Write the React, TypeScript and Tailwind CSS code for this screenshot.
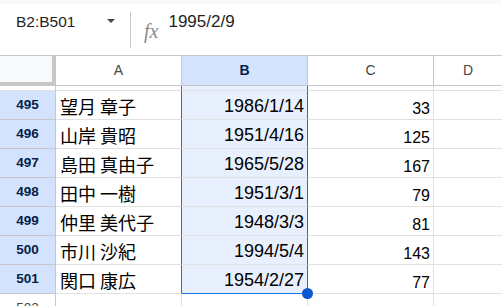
const ROWS = [
  { n: 495, name: "望月 章子", date: "1986/1/14", num: 33 },
  { n: 496, name: "山岸 貴昭", date: "1951/4/16", num: 125 },
  { n: 497, name: "島田 真由子", date: "1965/5/28", num: 167 },
  { n: 498, name: "田中 一樹", date: "1951/3/1", num: 79 },
  { n: 499, name: "仲里 美代子", date: "1948/3/3", num: 81 },
  { n: 500, name: "市川 沙紀", date: "1994/5/4", num: 143 },
  { n: 501, name: "関口 康広", date: "1954/2/27", num: 77 },
];

const sans = "font-['Liberation_Sans',Arial,sans-serif]";
const cjk = "font-['Noto_Sans_CJK_JP',sans-serif]";

const App = () => {
  return (
    <div className={`w-[502px] h-[306px] overflow-hidden bg-white ${sans}`}>
      <div className="h-[4px] bg-[#f8f9fa]" />

      {/* formula bar */}
      <div className="h-[51px] flex">
        <div className="w-[130px] flex items-start pl-[16px]">
          <span className="pt-[10px] text-[15.5px] leading-none text-[#1f1f1f]">B2:B501</span>
          <svg className="ml-auto mr-[15px] mt-[15px]" width="8" height="4" viewBox="0 0 8 4">
            <polygon points="0,0 8,0 4,4" fill="#444746" />
          </svg>
        </div>
        <div className="w-px bg-[#c7c7c7] mt-[8px] mb-[7px]" />
        <span className="ml-[13px] pt-[17px] text-[20px] leading-none italic text-[#8a8a8a] font-['Liberation_Serif',serif]">
          fx
        </span>
        <span className="ml-[10px] pt-[9px] text-[17px] leading-none text-[#1f1f1f]">1995/2/9</span>
      </div>

      {/* grid */}
      <div className="grid grid-cols-[56px_126px_126px_126px_1fr] border-t border-[#c7c7c7]">
        {/* column headers */}
        <div className="h-[30px] bg-[#f8f9fa] border-r-[4px] border-b-[4px] border-[#c7c7c7]" />
        <div className="h-[30px] flex items-center justify-center border-r border-b border-[#c7c7c7] text-[14px] text-[#444746]">
          A
        </div>
        <div className="h-[30px] flex items-center justify-center border-r border-b border-[#c7c7c7] bg-[#d3e3fd] text-[14px] font-bold text-[#041e49]">
          B
        </div>
        <div className="h-[30px] flex items-center justify-center border-r border-b border-[#c7c7c7] text-[14px] text-[#444746]">
          C
        </div>
        <div className="h-[30px] flex items-center justify-center border-b border-[#c7c7c7] text-[14px] text-[#444746]">
          D
        </div>

        {/* thin gap under frozen header */}
        <div className="h-[5px] border-r border-b border-r-[#c7c7c7] border-b-[#e1e1e1]" />
        <div className="h-[5px] border-r border-b border-r-[#1a73e8] border-b-[#e1e1e1]" />
        <div className="h-[5px] border-r border-b border-r-[#1a73e8] border-b-[#e1e1e1] bg-[#e8f0fe]" />
        <div className="h-[5px] border-r border-b border-[#e1e1e1]" />
        <div className="h-[5px] border-b border-[#e1e1e1]" />

        {ROWS.map((r, i) => {
          const last = i === ROWS.length - 1;
          return (
            <div key={r.n} className="contents">
              <div className="h-[29px] flex items-center justify-center bg-[#d3e3fd] border-r border-b border-[#c7c7c7] text-[13.5px] leading-none font-bold text-[#041e49]">
                {r.n}
              </div>
              <div
                className={`h-[29px] flex items-end pl-[4px] pb-[4px] border-r border-b border-r-[#1a73e8] border-b-[#e1e1e1] text-[18px] leading-none text-black ${cjk}`}
              >
                {r.name}
              </div>
              <div
                className={`relative h-[29px] flex items-end justify-end pr-[3px] pb-[4px] bg-[#e8f0fe] border-r border-b border-r-[#1a73e8] text-[18px] leading-none text-black ${
                  last ? "border-b-[#1a73e8]" : "border-b-[#e1e1e1]"
                }`}
              >
                {r.date}
                {last && (
                  <div className="absolute -right-[6px] -bottom-[6px] z-10 w-[11px] h-[11px] rounded-full bg-[#0b57d0]" />
                )}
              </div>
              <div className="h-[29px] flex items-end justify-end pr-[3px] pb-[2px] border-r border-b border-[#e1e1e1] text-[16px] leading-none text-black">
                {r.num}
              </div>
              <div className="h-[29px] border-b border-[#e1e1e1]" />
            </div>
          );
        })}

        {/* row 502 */}
        <div className="h-[29px] flex items-center justify-center border-r border-b border-r-[#c7c7c7] border-b-[#e1e1e1] text-[13.5px] leading-none text-[#444746]">
          502
        </div>
        <div className="h-[29px] border-r border-b border-[#e1e1e1]" />
        <div className="h-[29px] border-r border-b border-[#e1e1e1]" />
        <div className="h-[29px] border-r border-b border-[#e1e1e1]" />
        <div className="h-[29px] border-b border-[#e1e1e1]" />
      </div>
    </div>
  );
};

export default App;
